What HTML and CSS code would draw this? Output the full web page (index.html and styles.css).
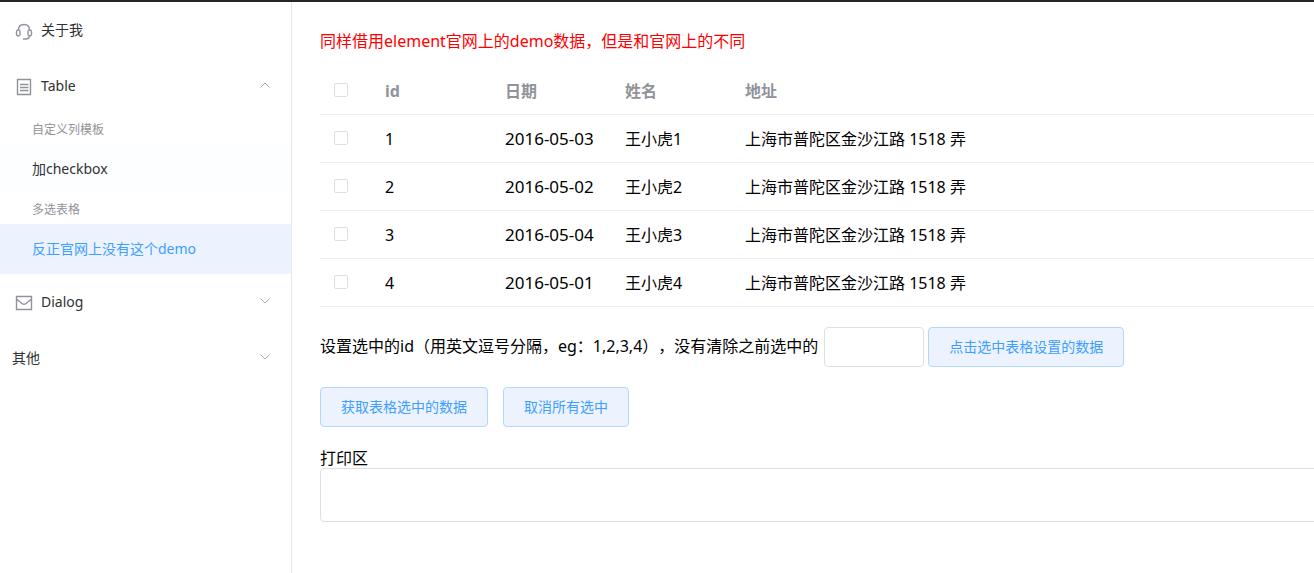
FILE: index.html
```html
<!DOCTYPE html>
<html lang="zh-CN">
<head>
<meta charset="UTF-8">
<title>Table</title>
<link rel="stylesheet" href="styles.css">
</head>
<body>

<div class="container">
  <nav class="menu">
    <a class="menu-item" href="#about">
      <svg class="icon" viewBox="0 0 18 18">
        <path d="M3.500 7C3.500 3 6 1.500 9 1.500S14.500 3 14.500 7M14.500 12.500c0 2.500-1.500 3.500-4 3.500H8"/>
        <rect x="1.500" y="7" width="3.500" height="6" rx="1.700"/>
        <rect x="13" y="7" width="3.500" height="6" rx="1.700"/>
      </svg>
      <span>关于我</span>
    </a>

    <button class="menu-item" type="button" aria-expanded="true">
      <svg class="icon" viewBox="0 0 18 18">
        <path d="M2.500 1.500h13v15h-13zM5 6.500h8.500M5 9.500h8.500M5 12.500h8.500"/>
      </svg>
      <span>Table</span>
      <svg class="arrow" viewBox="0 0 12 12"><path d="M1.500 8.500L6 4l4.500 4.500"/></svg>
    </button>
    <div class="group-title">自定义列模板</div>
    <a class="sub-item hover" href="#checkbox">加checkbox</a>
    <div class="group-title">多选表格</div>
    <a class="sub-item active" href="#demo">反正官网上没有这个demo</a>

    <button class="menu-item" type="button" aria-expanded="false">
      <svg class="icon" viewBox="0 0 18 18">
        <path d="M1.500 2.500h15v13h-15zM1.500 5l5.500 4.500q2 1.500 4 0L16.500 5"/>
      </svg>
      <span>Dialog</span>
      <svg class="arrow" viewBox="0 0 12 12"><path d="M1.500 3.500L6 8l4.500-4.500"/></svg>
    </button>
    <button class="menu-item" type="button" aria-expanded="false">
      <span>其他</span>
      <svg class="arrow" viewBox="0 0 12 12"><path d="M1.500 3.500L6 8l4.500-4.500"/></svg>
    </button>
  </nav>

  <main class="main">
    <div class="content">
      <p class="tip">同样借用element官网上的demo数据，但是和官网上的不同</p>

      <table class="table">
        <thead>
          <tr>
            <th class="col-check"><input type="checkbox" aria-label="全选"></th>
            <th class="col">id</th>
            <th class="col">日期</th>
            <th class="col">姓名</th>
            <th>地址</th>
          </tr>
        </thead>
        <tbody>
          <tr>
            <td class="col-check"><input type="checkbox" aria-label="1"></td>
            <td>1</td>
            <td class="date">2016-05-03</td>
            <td>王小虎1</td>
            <td>上海市普陀区金沙江路 1518 弄</td>
          </tr>
          <tr>
            <td class="col-check"><input type="checkbox" aria-label="2"></td>
            <td>2</td>
            <td class="date">2016-05-02</td>
            <td>王小虎2</td>
            <td>上海市普陀区金沙江路 1518 弄</td>
          </tr>
          <tr>
            <td class="col-check"><input type="checkbox" aria-label="3"></td>
            <td>3</td>
            <td class="date">2016-05-04</td>
            <td>王小虎3</td>
            <td>上海市普陀区金沙江路 1518 弄</td>
          </tr>
          <tr>
            <td class="col-check"><input type="checkbox" aria-label="4"></td>
            <td>4</td>
            <td class="date">2016-05-01</td>
            <td>王小虎4</td>
            <td>上海市普陀区金沙江路 1518 弄</td>
          </tr>
        </tbody>
      </table>

      <div class="row row-set">
        <label class="set-label" for="ids">设置选中的id（用英文逗号分隔，eg：1,2,3,4），没有清除之前选中的</label>
        <input class="input" id="ids" type="text">
        <button class="btn" type="button">点击选中表格设置的数据</button>
      </div>
      <div class="row row-get">
        <button class="btn" type="button">获取表格选中的数据</button>
        <button class="btn" type="button">取消所有选中</button>
      </div>

      <label class="print-label" for="print">打印区</label>
      <textarea class="textarea" id="print" rows="2"></textarea>
    </div>
  </main>
</div>

</body>
</html>
```
FILE: styles.css
```css
* {
  box-sizing: border-box;
}
body {
  margin: 0;
  font-family: "Noto Sans", "Noto Sans CJK SC", sans-serif;
  font-size: 16px;
  line-height: 20px;
  color: #000;
  background: #fff;
  text-spacing-trim: space-all;
}
button, input, textarea {
  font-family: inherit;
}
.container {
  display: flex;
  min-height: 100vh;
  border-top: 2px solid #24262b;
}

/* 左侧菜单 */
.menu {
  flex: none;
  width: 292px;
  border-right: 1px solid #e6e6e6;
}
.menu-item {
  display: flex;
  align-items: center;
  width: 100%;
  height: 56px;
  padding: 0 20px 0 12px;
  border: 0;
  background: none;
  color: #303133;
  font-size: 14px;
  text-decoration: none;
  cursor: pointer;
}
button.menu-item {
  padding-bottom: 2px;
}
.icon {
  width: 18px;
  height: 18px;
  margin: 4px 8px 0 3px;
  fill: none;
  stroke: #909399;
  stroke-width: 1.4;
}
.arrow {
  width: 12px;
  height: 12px;
  margin-left: auto;
  fill: none;
  stroke: #a6a9ad;
}
.group-title {
  padding: 6px 0 4px 32px;
  font-size: 12px;
  color: #909399;
}
.sub-item {
  display: block;
  padding-left: 32px;
  line-height: 50px;
  font-size: 14px;
  color: #303133;
  text-decoration: none;
}
.sub-item.hover {
  background: #fcfeff;
}
.sub-item.active {
  background: #ecf3ff;
  color: #409eff;
}

/* 右侧内容，超出窗口的部分不显示 */
.main {
  flex: 1;
  min-width: 0;
  padding: 29px 0 20px 28px;
  overflow: hidden;
}
.content {
  margin-right: -20px;
}
.tip {
  margin: 0 0 16px;
  color: #f00;
}
.table {
  width: 100%;
  table-layout: fixed;
  border-collapse: separate;
  border-spacing: 0;
}
th, td {
  height: 48px;
  padding: 0 10px;
  border-bottom: 1px solid #ebeef5;
  text-align: left;
}
th {
  color: #909399;
}
.col {
  width: 120px;
}
.col-check {
  width: 55px;
  padding: 0 14px;
}
.date {
  font-size: 17px;
}
.col-check input {
  display: block;
  width: 14px;
  height: 14px;
  margin: 0 0 2px;
  appearance: none;
  border: 1px solid #dcdfe6;
  border-radius: 2px;
  background: #fff;
}
.col-check input:checked {
  background: #409eff;
}

.row {
  display: flex;
  align-items: center;
  margin: 20px 0;
}
.row-set {
  gap: 4px;
}
.row-get {
  gap: 15px;
}
.set-label {
  padding: 0 2px 2px 0;
}
.input {
  width: 100px;
  height: 40px;
  padding: 0 15px;
  border: 1px solid #dcdfe6;
  border-radius: 4px;
}
.btn {
  height: 40px;
  padding: 0 20px 2px;
  border: 1px solid #b3d8ff;
  border-radius: 4px;
  background: #ecf3ff;
  color: #409eff;
  font-size: 14px;
  cursor: pointer;
}
.print-label {
  display: block;
  margin-top: 21px;
}
.textarea {
  display: block;
  width: 100%;
  height: 54px;
  padding: 5px 15px;
  border: 1px solid #dcdfe6;
  border-radius: 4px;
  resize: none;
}
```
